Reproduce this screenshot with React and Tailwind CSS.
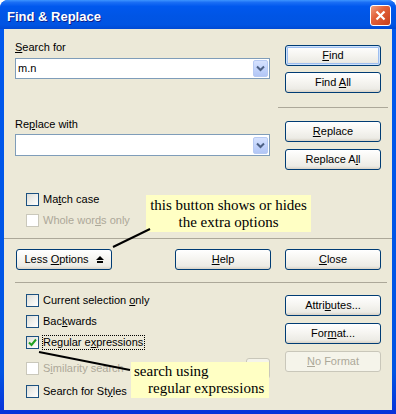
import React from "react"

function U({ children }) {
    return <span className="underline underline-offset-[1px]">{children}</span>
}

function XpButton({ children, width = "w-[96px]", def, disabled, className = "" }) {
    return (
        <div
            className={`${width} h-[21px] shrink-0 rounded-[3px] border flex items-center justify-center leading-[13px] ${disabled
                ? "border-[#C9C7BA] bg-[#F5F4EA] text-[#ACA899]"
                : "border-[#003C74] bg-[linear-gradient(to_bottom,#FFFFFF_0%,#F6F5F1_45%,#ECEBE5_85%,#D8D2C6_100%)] text-black"
                } ${def ? "shadow-[inset_0_0_0_1px_#CEE2FB,inset_0_0_0_2px_#9EBEF0]" : ""} ${className}`}
        >
            {children}
        </div>
    )
}

function Combo({ value, height = "h-[21px]", className = "" }) {
    return (
        <div className={`${height} w-full border border-[#7F9DB9] bg-white flex items-center ${className}`}>
            <span className="flex-1 pl-[2px] leading-[13px]">{value}</span>
            <span className="w-[15px] h-[17px] mr-[1px] rounded-[2px] border border-[#B7CAF3] bg-[linear-gradient(to_bottom,#D6E2FE_0%,#C3D4FC_50%,#B2C6F5_100%)] flex items-center justify-center">
                <svg width="9" height="7" viewBox="0 0 9 7">
                    <path d="M1 1.5 L4.5 5 L8 1.5" fill="none" stroke="#4D6185" strokeWidth="2" />
                </svg>
            </span>
        </div>
    )
}

function Box({ checked, disabled }) {
    return (
        <span
            className={`w-[13px] h-[13px] shrink-0 border flex items-center justify-center ${disabled
                ? "border-[#CAC8BB] bg-white"
                : "border-[#1C5180] bg-[linear-gradient(135deg,#DCDCD7_0%,#EEEEEA_45%,#FFFFFF_100%)]"
                }`}
        >
            {checked && (
                <svg width="9" height="9" viewBox="0 0 9 9">
                    <path d="M1 4.5 L3.5 7 L8 1.5" fill="none" stroke="#21A121" strokeWidth="2" />
                </svg>
            )}
        </span>
    )
}

function Check({ label, checked, disabled, focus, className = "" }) {
    return (
        <div className={`flex items-start ${className}`}>
            <Box checked={checked} disabled={disabled} />
            {focus ? (
                <span className="ml-[3px] -mt-px border border-dotted border-black leading-[13px] pr-px">{label}</span>
            ) : (
                <span className={`ml-[4px] leading-[13px] ${disabled ? "text-[#ACA899]" : ""}`}>{label}</span>
            )}
        </div>
    )
}

export default function App() {
    return (
        <div className="relative w-[396px] h-[414px] bg-white font-['Liberation_Sans',Arial,sans-serif] text-[11px] text-black">
            <div className="w-full h-full flex flex-col rounded-t-[8px] overflow-hidden bg-[linear-gradient(to_bottom,#0058EE_0%,#0054E3_90%,#0831D9_100%)]">
                {/* Title bar */}
                <div className="h-[29px] shrink-0 flex items-center pl-[7px] pr-[5px] bg-[linear-gradient(to_bottom,#3D95FF_0%,#1B6FF5_8%,#0058EE_22%,#0055E5_55%,#0054E3_85%,#0049D4_100%)]">
                    <span className="mt-[4px] text-[13px] font-bold text-white leading-[16px] [text-shadow:1px_1px_0_#0A1E8C]">
                        Find &amp; Replace
                    </span>
                    <div className="ml-auto w-[21px] h-[21px] mt-[2px] rounded-[3px] border border-white bg-[linear-gradient(135deg,#F0A080_0%,#E2613A_40%,#C8401A_100%)] flex items-center justify-center">
                        <svg width="11" height="11" viewBox="0 0 11 11">
                            <path d="M1.5 1.5 L9.5 9.5 M9.5 1.5 L1.5 9.5" stroke="white" strokeWidth="2.2" />
                        </svg>
                    </div>
                </div>

                {/* Body */}
                <div className="flex-1 mx-[4px] mb-[4px] bg-[#ECE9D8] flex flex-col">
                    <div className="flex pt-[12px] pl-[11px] pr-[11px]">
                        <div className="w-[255px] flex flex-col">
                            <div className="h-[13px] leading-[13px]"><U>S</U>earch for</div>
                            <Combo value="m.n" className="mt-[4px]" />
                            <div className="mt-[39px] h-[13px] leading-[13px]">Re<U>p</U>lace with</div>
                            <Combo value="" height="h-[22px]" className="mt-[3px]" />
                            <Check label={<>Ma<U>t</U>ch case</>} className="mt-[37px] ml-[11px]" />
                            <Check label={<>Whole wor<U>d</U>s only</>} disabled className="mt-[8px] ml-[11px]" />
                        </div>
                        <div className="ml-[15px] w-[96px] flex flex-col">
                            <XpButton def className="mt-[4px]"><span><U>F</U>ind</span></XpButton>
                            <XpButton className="mt-[6px]"><span>Find <U>A</U>ll</span></XpButton>
                            <div className="mt-[14px] -mx-[7px] h-px bg-[#ACA899]" />
                            <XpButton className="mt-[13px]"><span><U>R</U>eplace</span></XpButton>
                            <XpButton className="mt-[7px]"><span>Replace A<U>l</U>l</span></XpButton>
                        </div>
                    </div>

                    <div className="mt-[11px] h-px bg-[#ACA899]" />

                    <div className="mt-[10px] flex pl-[12px]">
                        <XpButton>
                            <span>Less <U>O</U>ptions</span>
                            <svg className="ml-[7px]" width="8" height="8" viewBox="0 0 8 8">
                                <polygon points="4,0 8,4 0,4" fill="black" />
                                <rect x="1" y="5" width="6" height="2" fill="black" />
                            </svg>
                        </XpButton>
                        <XpButton className="ml-[63px]"><span><U>H</U>elp</span></XpButton>
                        <XpButton className="ml-[14px]"><span><U>C</U>lose</span></XpButton>
                    </div>

                    <div className="mt-[12px] ml-[11px] mr-[5px] h-px bg-[#ACA899]" />

                    <div className="flex pt-[11px] pl-[22px]">
                        <div className="w-[244px] flex flex-col">
                            <Check label={<>Current selection <U>o</U>nly</>} className="h-[21px]" />
                            <Check label={<>Bac<U>k</U>wards</>} className="h-[21px]" />
                            <Check label={<>Regular e<U>x</U>pressions</>} checked focus className="h-[26px]" />
                            <div className="h-[23px] flex items-start">
                                <Check label={<>S<U>i</U>milarity search</>} disabled />
                                <XpButton width="w-[24px]" disabled className="ml-auto -mt-[4px]"><span>...</span></XpButton>
                            </div>
                            <Check label={<>Search for St<U>y</U>les</>} className="h-[13px]" />
                        </div>
                        <div className="ml-[15px] w-[96px] flex flex-col pt-[1px]">
                            <XpButton><span>Attri<U>b</U>utes...</span></XpButton>
                            <XpButton className="mt-[7px]"><span>For<U>m</U>at...</span></XpButton>
                            <XpButton disabled className="mt-[7px]"><span><U>N</U>o Format</span></XpButton>
                        </div>
                    </div>
                </div>
            </div>

            {/* Annotation callouts */}
            <div className="absolute left-[146px] top-[195px] w-[165px] h-[37px] bg-[#FFFFC4] flex flex-col items-center justify-center font-['Liberation_Serif','Times_New_Roman',serif] text-[15px] leading-[17px]">
                <span>this button shows or hides</span>
                <span>the extra options</span>
            </div>
            <div className="absolute left-[131px] top-[362px] w-[138px] h-[36px] bg-[#FFFFC4] flex flex-col justify-center pl-[3px] font-['Liberation_Serif','Times_New_Roman',serif] text-[15px] leading-[17px]">
                <span>search using</span>
                <span className="pl-[14px]">regular expressions</span>
            </div>
            <svg className="absolute inset-0 pointer-events-none" width="396" height="414">
                <line x1="150" y1="229" x2="113" y2="247" stroke="black" strokeWidth="2" />
                <line x1="39" y1="352" x2="130" y2="370" stroke="black" strokeWidth="2" />
            </svg>
        </div>
    )
}
